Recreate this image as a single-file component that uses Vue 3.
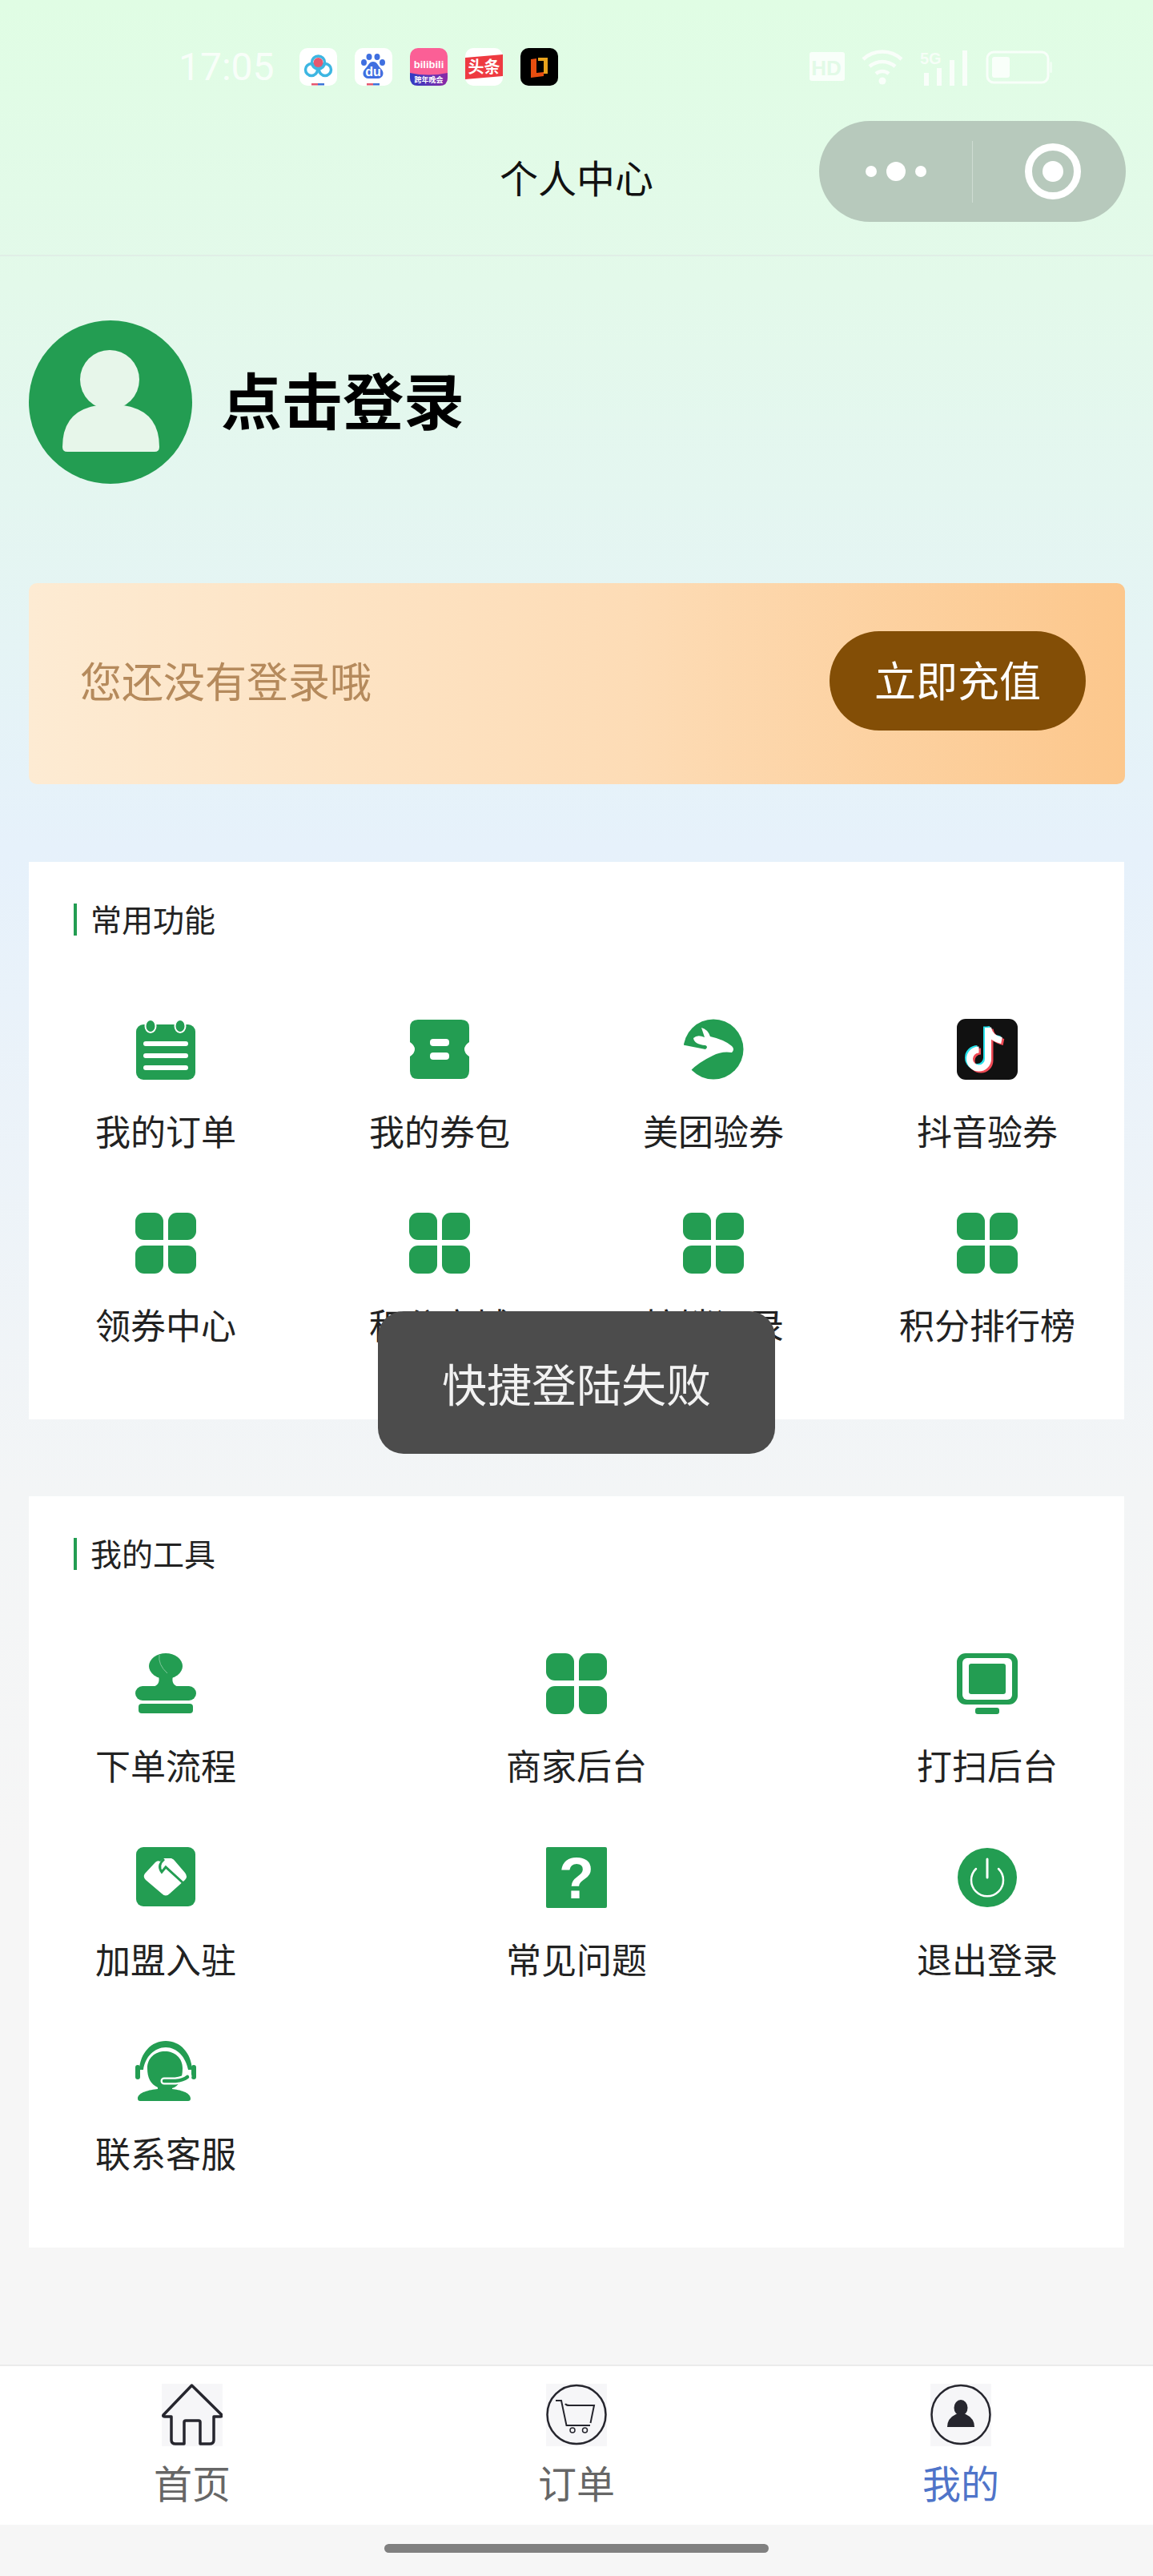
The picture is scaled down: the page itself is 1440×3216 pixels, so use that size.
<script setup>
const commonItems = [
  { icon: 'order', label: '我的订单' },
  { icon: 'ticket', label: '我的券包' },
  { icon: 'meituan', label: '美团验券' },
  { icon: 'douyin', label: '抖音验券' },
  { icon: 'grid', label: '领券中心' },
  { icon: 'grid', label: '积分商城' },
  { icon: 'grid', label: '核销记录' },
  { icon: 'grid', label: '积分排行榜' }
]

const toolItems = [
  { icon: 'stamp', label: '下单流程' },
  { icon: 'grid', label: '商家后台' },
  { icon: 'monitor', label: '打扫后台' },
  { icon: 'join', label: '加盟入驻' },
  { icon: 'help', label: '常见问题' },
  { icon: 'power', label: '退出登录' },
  { icon: 'service', label: '联系客服' }
]

const tabs = [
  { icon: 'tab-home', label: '首页' },
  { icon: 'tab-cart', label: '订单' },
  { icon: 'tab-me', label: '我的', active: true }
]
</script>

<template>
  <div class="page">
    <!-- icon sprite -->
    <svg class="sprite" aria-hidden="true">
      <defs>
        <linearGradient id="bili-bottom" x1="0" y1="0" x2="1" y2="0">
          <stop offset="0" stop-color="#2f3cc4" />
          <stop offset="1" stop-color="#8b2aa6" />
        </linearGradient>
      </defs>
      <symbol id="order" viewBox="0 0 76 76">
        <rect x="1" y="7" width="74" height="69" rx="9" fill="#239d52" />
        <ellipse cx="19" cy="9" rx="6.5" ry="8" fill="#239d52" stroke="#fff" stroke-width="2" />
        <ellipse cx="56" cy="9" rx="6.5" ry="8" fill="#239d52" stroke="#fff" stroke-width="2" />
        <path d="M13 31H63M13 46H63M13 61H63" stroke="#fff" stroke-width="6" stroke-linecap="round" />
      </symbol>
      <symbol id="ticket" viewBox="0 0 76 76">
        <path d="M11 1H65Q75 1 75 11V29Q69 33 69 38Q69 43 75 47V65Q75 75 65 75H11Q1 75 1 65V47Q7 43 7 38Q7 33 1 29V11Q1 1 11 1Z" fill="#239d52" />
        <rect x="26" y="25" width="24" height="9" rx="4" fill="#fff" />
        <rect x="26" y="42" width="24" height="9" rx="4" fill="#fff" />
      </symbol>
      <symbol id="meituan" viewBox="0 0 76 76">
        <circle cx="38" cy="38" r="37.5" fill="#239d52" />
        <path d="M-2 32 L28 38 Q32 35 28 33 Q14 32 13 24 Q18 19 27 23 L23 11 Q31 13 34 22 Q52 26 61 34 Q65 38 61 42 Q48 40 37 46 Q20 54 9 65 L-2 70Z" fill="#fff" />
      </symbol>
      <symbol id="douyin" viewBox="0 0 76 76">
        <rect width="76" height="76" rx="11" fill="#111" />
        <g fill="none" stroke-width="8">
          <path d="M39 11V50A11.500 11.500 0 1 1 27.500 38.500M39 11Q41 24 56 27" stroke="#25e0ea" transform="translate(-2 -1.500)" />
          <path d="M39 11V50A11.500 11.500 0 1 1 27.500 38.500M39 11Q41 24 56 27" stroke="#ef4a55" transform="translate(2.500 2)" />
          <path d="M39 11V50A11.500 11.500 0 1 1 27.500 38.500M39 11Q41 24 56 27" stroke="#fff" />
        </g>
      </symbol>
      <symbol id="grid" viewBox="0 0 76 76">
        <g fill="#239d52">
          <path d="M0 11A11 11 0 0 1 11 0H24A11 11 0 0 1 35 11V34H11A11 11 0 0 1 0 23Z" />
          <path d="M76 11A11 11 0 0 0 65 0H52A11 11 0 0 0 41 11V34H65A11 11 0 0 0 76 23Z" />
          <path d="M0 65A11 11 0 0 0 11 76H24A11 11 0 0 0 35 65V41H11A11 11 0 0 0 0 52Z" />
          <path d="M76 65A11 11 0 0 1 65 76H52A11 11 0 0 1 41 65V41H65A11 11 0 0 1 76 52Z" />
        </g>
      </symbol>
      <symbol id="stamp" viewBox="0 0 76 76">
        <g fill="#239d52">
          <ellipse cx="38" cy="16" rx="21" ry="16" />
          <path d="M29 28Q32 41 20 42H56Q44 41 47 28Z" />
          <rect y="41" width="76" height="18" rx="9" />
          <rect x="4" y="63" width="68" height="12" rx="4" />
        </g>
        <path d="M30 2Q28 14 40 25" fill="none" stroke="#7fc79b" stroke-width="1" />
      </symbol>
      <symbol id="monitor" viewBox="0 0 76 76">
        <rect width="76" height="64" rx="11" fill="#239d52" />
        <rect x="7" y="6" width="62" height="52" rx="6" fill="#fff" />
        <rect x="15" y="13" width="46" height="38" rx="3" fill="#239d52" />
        <rect x="23" y="68" width="30" height="8" rx="3" fill="#239d52" />
      </symbol>
      <symbol id="join" viewBox="0 0 76 76">
        <rect x="1" width="74" height="74" rx="9" fill="#239d52" />
        <path d="M25 19Q28 16 31 18L36 14H45Q48 15 50 18L62 32Q66 37 62 41L43 58Q38 63 33 58L13 41Q9 37 12 33Z" fill="#fff" />
        <path d="M36 15Q27 23 33 31L38 25L61 46" fill="none" stroke="#239d52" stroke-width="3" />
      </symbol>
      <symbol id="help" viewBox="0 0 76 76">
        <rect width="76" height="76" rx="2" fill="#239d52" />
      </symbol>
      <symbol id="power" viewBox="0 0 76 76">
        <circle cx="38" cy="38" r="37" fill="#239d52" />
        <path d="M24 27A20 20 0 1 0 52 27" fill="none" stroke="#fff" stroke-width="2.500" stroke-linecap="round" />
        <path d="M38 15V38" stroke="#fff" stroke-width="3" stroke-linecap="round" />
      </symbol>
      <symbol id="service" viewBox="0 0 76 76">
        <g fill="#239d52">
          <path d="M5 36C6 15 20 0 38 0S70 15 71 36H66C63 20 52 8 38 8S12 20 10 36Z" />
          <rect x="0" y="30" width="6" height="18" rx="3" />
          <rect x="70" y="30" width="6" height="18" rx="3" />
          <path d="M15 34C15 21 25 13 37 13S59 21 59 34C59 48 54 57 46 59V60C55 61 69 64 69 72Q69 75 66 75H6Q3 75 3 72C3 64 18 61 28 60V58C19 54 15 46 15 34Z" />
        </g>
        <path d="M36 50H50Q60 49 66 44" fill="none" stroke="#fff" stroke-width="9" stroke-linecap="round" />
        <path d="M36 50H50Q60 49 65 45" fill="none" stroke="#239d52" stroke-width="4.500" stroke-linecap="round" />
      </symbol>
      <symbol id="tab-home" viewBox="0 0 76 78">
        <rect width="76" height="78" fill="#f6f6f8" />
        <path d="M37.500 2L2 39Q1 41 4 41H12V70Q12 75 17 75H28V48Q28 46 30 46H46Q48 46 48 48V75H60Q65 75 65 70V41H73Q76 41 75 39Z" fill="none" stroke="#26262e" stroke-width="3.500" stroke-linejoin="round" />
      </symbol>
      <symbol id="tab-cart" viewBox="0 0 76 78">
        <rect width="76" height="78" fill="#f6f6f8" />
        <circle cx="38" cy="38.500" r="36.500" fill="none" stroke="#26262e" stroke-width="2.500" />
        <path d="M12 21H19L25.500 52H55" fill="none" stroke="#26262e" stroke-width="2" />
        <path d="M24 25Q25 27 29 27H60L55.500 49" fill="none" stroke="#26262e" stroke-width="2" />
        <circle cx="33" cy="58" r="3" fill="none" stroke="#26262e" stroke-width="1.500" />
        <circle cx="48.500" cy="58" r="3" fill="none" stroke="#26262e" stroke-width="1.500" />
      </symbol>
      <symbol id="tab-me" viewBox="0 0 76 78">
        <rect width="76" height="78" fill="#f6f6f8" />
        <circle cx="38" cy="38.500" r="36.500" fill="none" stroke="#26262e" stroke-width="2.500" />
        <ellipse cx="38" cy="30" rx="8.500" ry="10" fill="#26262e" />
        <path d="M21 54Q21 43 32 38H44Q55 43 55 54Z" fill="#26262e" />
      </symbol>
    </svg>

    <header class="topbar">
      <div class="status">
        <div class="status-left">
          <span class="time">17:05</span>
          <!-- background apps -->
          <div class="apps">
            <svg class="app" viewBox="0 0 47 47">
              <rect width="47" height="47" rx="10" fill="#fff" />
              <g fill="none" stroke="#3db6e2" stroke-width="3.500">
                <circle cx="15" cy="27" r="7.500" />
                <circle cx="32" cy="27" r="7.500" />
                <circle cx="23.500" cy="18" r="8" />
              </g>
              <circle cx="23.500" cy="18" r="6" fill="#e6586f" />
              <rect x="15" y="44" width="8" height="2.500" fill="#e6586f" />
              <rect x="23" y="44" width="8" height="2.500" fill="#3c74d8" />
            </svg>
            <svg class="app" viewBox="0 0 47 47">
              <rect width="47" height="47" rx="10" fill="#fff" />
              <g fill="#3f6fe0">
                <ellipse cx="11.500" cy="18" rx="3.500" ry="4" />
                <ellipse cx="18" cy="11" rx="3.500" ry="4" />
                <ellipse cx="28" cy="11" rx="3.500" ry="4" />
                <ellipse cx="34.500" cy="18" rx="3.500" ry="4" />
                <path d="M23 17C28 17 29 22 33 26C38 31 35 38 29 38H17C11 38 8 31 13 26C17 22 18 17 23 17Z" />
              </g>
              <text x="23" y="35" text-anchor="middle" class="app-du">du</text>
              <rect x="15" y="44" width="8" height="2.500" fill="#e6586f" />
              <rect x="23" y="44" width="8" height="2.500" fill="#3c74d8" />
            </svg>
            <svg class="app" viewBox="0 0 47 47">
              <rect width="47" height="47" rx="10" fill="#fb5f96" />
              <path d="M0 31Q23 36 47 31V37Q47 47 37 47H10Q0 47 0 37Z" fill="url(#bili-bottom)" />
              <text x="23.500" y="25" text-anchor="middle" class="app-bili">bilibili</text>
              <text x="23.500" y="43" text-anchor="middle" class="app-bili-sub">跨年晚会</text>
            </svg>
            <svg class="app" viewBox="0 0 47 47">
              <rect width="47" height="47" rx="10" fill="#fff" />
              <path d="M0 12L47 8V35L0 39Z" fill="#ee3a41" />
              <text x="23.500" y="31" text-anchor="middle" class="app-toutiao">头条</text>
            </svg>
            <svg class="app" viewBox="0 0 47 47">
              <rect width="47" height="47" rx="10" fill="#000" />
              <path d="M22 12H34V32H29V16H22Z" fill="#e8a21c" />
              <path d="M13 14L20 13V31L29 30V35L13 37Z" fill="#e84e10" />
            </svg>
          </div>
        </div>
        <div class="status-right">
          <svg class="ic-hd" viewBox="0 0 44 38">
            <rect width="44" height="36" rx="3" fill="#fff" opacity=".8" />
            <text x="21" y="29" text-anchor="middle" class="hd-text">HD</text>
          </svg>
          <svg class="ic-wifi" viewBox="0 0 54 46">
            <g fill="none" stroke="#fff" stroke-width="4.500" opacity=".8">
              <path d="M3 13A35 35 0 0 1 51 13" />
              <path d="M11 22A24 24 0 0 1 43 22" />
              <path d="M19 31A12 12 0 0 1 35 31" />
            </g>
            <circle cx="27" cy="40" r="4.500" fill="#fff" opacity=".8" />
          </svg>
          <svg class="ic-signal" viewBox="0 0 62 46">
            <text x="0" y="19" class="signal-text">5G</text>
            <g fill="#fff" opacity=".8">
              <rect x="5" y="30" width="6" height="16" />
              <rect x="21" y="24" width="6" height="22" />
              <rect x="37" y="14" width="6" height="32" />
              <rect x="53" y="2" width="6" height="44" />
            </g>
          </svg>
          <svg class="ic-battery" viewBox="0 0 84 42">
            <rect x="2" y="2" width="76" height="38" rx="8" fill="none" stroke="#fff" stroke-width="3" opacity=".75" />
            <rect x="8" y="8" width="22" height="26" rx="3" fill="#fff" opacity=".8" />
            <rect x="80" y="14" width="3" height="14" rx="1.500" fill="#fff" opacity=".5" />
          </svg>
        </div>
      </div>
      <div class="navbar">
        <h1 class="nav-title">个人中心</h1>
        <div class="capsule">
          <div class="capsule-more">
            <i class="dot"></i>
            <i class="dot dot-big"></i>
            <i class="dot"></i>
          </div>
          <div class="capsule-line"></div>
          <div class="capsule-close"><i></i></div>
        </div>
      </div>
    </header>

    <section class="profile">
      <svg class="avatar" viewBox="0 0 204 204">
        <circle cx="102" cy="102" r="102" fill="#239d52" />
        <circle cx="101" cy="74" r="37" fill="#e7f6ea" />
        <path d="M42 158Q42 105 102 105Q163 105 163 158Q163 164 157 164H48Q42 164 42 158Z" fill="#e7f6ea" />
      </svg>
      <span class="login-text">点击登录</span>
    </section>

    <section class="banner">
      <span class="banner-text">您还没有登录哦</span>
      <span class="banner-btn">立即充值</span>
    </section>

    <section class="card card-common">
      <h2 class="card-title">常用功能</h2>
      <div class="grid-four">
        <div v-for="item in commonItems" :key="item.label" class="item">
          <svg class="item-icon"><use :href="'#' + item.icon" /></svg>
          <span class="item-label">{{ item.label }}</span>
        </div>
      </div>
    </section>

    <section class="card card-tools">
      <h2 class="card-title">我的工具</h2>
      <div class="grid-three">
        <div v-for="item in toolItems" :key="item.label" class="item">
          <svg class="item-icon">
            <use :href="'#' + item.icon" />
            <text v-if="item.icon === 'help'" x="38" y="64" text-anchor="middle" class="help-mark">?</text>
          </svg>
          <span class="item-label">{{ item.label }}</span>
        </div>
      </div>
    </section>

    <div class="spacer"></div>

    <nav class="tabbar">
      <div v-for="tab in tabs" :key="tab.label" class="tab" :class="{ active: tab.active }">
        <svg class="tab-icon"><use :href="'#' + tab.icon" /></svg>
        <span class="tab-label">{{ tab.label }}</span>
      </div>
    </nav>
    <div class="home-area"><div class="home-bar"></div></div>

    <div class="toast">快捷登陆失败</div>
  </div>
</template>

<style scoped>
.page {
  position: relative;
  width: 1440px;
  min-height: 3216px;
  display: flex;
  flex-direction: column;
  overflow: hidden;
  font-family: "Noto Sans CJK SC", "Noto Sans", sans-serif;
  color: #222;
  background: linear-gradient(180deg, #e0fde4 0, #e3f9ea 11%, #e6f1fb 33%, #f3f5f6 58%, #f6f6f6 72%);
}

.sprite {
  position: absolute;
  width: 0;
  height: 0;
}

.topbar {
  height: 320px;
  border-bottom: 2px solid #e0eee6;
  box-sizing: border-box;
}

.status {
  height: 150px;
  box-sizing: border-box;
  padding: 60px 125px 0 223px;
  display: flex;
  justify-content: space-between;
  align-items: flex-start;
}

.status-left {
  display: flex;
  align-items: center;
  height: 47px;
}

.time {
  width: 151px;
  font-family: Roboto, sans-serif;
  font-size: 48px;
  line-height: 47px;
  color: rgba(255, 255, 255, 0.8);
}

.apps {
  display: flex;
  gap: 22px;
}

.app {
  width: 47px;
  height: 47px;
  display: block;
}

.app-du {
  font-family: "Liberation Sans", sans-serif;
  font-size: 16px;
  font-weight: 700;
  fill: #fff;
}

.app-bili {
  font-family: "Liberation Sans", sans-serif;
  font-size: 13px;
  font-weight: 700;
  fill: #fff;
}

.app-bili-sub {
  font-size: 9px;
  font-weight: 700;
  fill: #fff;
}

.app-toutiao {
  font-size: 20px;
  font-weight: 700;
  fill: #fff;
}

.status-right {
  display: flex;
  align-items: center;
  height: 47px;
  gap: 20px;
}

.ic-hd {
  width: 44px;
  height: 38px;
}

.hd-text {
  font-family: "Liberation Sans", sans-serif;
  font-size: 26px;
  font-weight: 700;
  fill: #e2fae7;
}

.ic-wifi {
  width: 54px;
  height: 46px;
}

.ic-signal {
  width: 62px;
  height: 46px;
}

.signal-text {
  font-family: "Liberation Sans", sans-serif;
  font-size: 20px;
  font-weight: 700;
  fill: #fff;
  opacity: 0.7;
}

.ic-battery {
  width: 84px;
  height: 42px;
}

.navbar {
  display: flex;
  justify-content: center;
  position: relative;
  height: 168px;
}

.nav-title {
  margin: 46px 0 0;
  font-size: 48px;
  line-height: 48px;
  font-weight: 400;
  color: #111;
}

/* wechat menu capsule sits over the nav bar */
.capsule {
  position: absolute;
  top: 1px;
  left: 1023px;
  width: 383px;
  height: 126px;
  border-radius: 63px;
  background: #b7c9bc;
  display: flex;
  align-items: center;
}

.capsule-more {
  width: 191px;
  display: flex;
  justify-content: center;
  align-items: center;
  gap: 12px;
}

.dot {
  width: 14px;
  height: 14px;
  border-radius: 50%;
  background: #fff;
}

.dot-big {
  width: 24px;
  height: 24px;
}

.capsule-line {
  width: 1px;
  height: 77px;
  background: #cfdcd3;
}

.capsule-close {
  flex: 1;
  display: flex;
  justify-content: center;
  padding-left: 8px;
}

.capsule-close i {
  width: 70px;
  height: 70px;
  box-sizing: border-box;
  border: 9px solid #fff;
  border-radius: 50%;
  display: flex;
  align-items: center;
  justify-content: center;
}

.capsule-close i::after {
  content: "";
  width: 26px;
  height: 26px;
  border-radius: 50%;
  background: #fff;
}

.profile {
  display: flex;
  align-items: center;
  gap: 36px;
  padding: 80px 0 0 36px;
}

.avatar {
  width: 204px;
  height: 204px;
  display: block;
}

.login-text {
  padding-bottom: 10px;
  font-size: 76px;
  line-height: 90px;
  font-weight: 700;
  color: #000;
}

.banner {
  margin: 124px 35px 0 36px;
  height: 251px;
  padding: 0 49px 0 64px;
  border-radius: 10px;
  display: flex;
  align-items: center;
  justify-content: space-between;
  background: linear-gradient(90deg, #fdebd3 0, #fddcb6 55%, #fcc78c 100%);
}

.banner-text {
  padding-bottom: 10px;
  font-size: 52px;
  color: #b58a5c;
}

.banner-btn {
  width: 320px;
  height: 124px;
  margin-bottom: 8px;
  border-radius: 62px;
  background: #834e06;
  color: #fff;
  font-size: 52px;
  line-height: 120px;
  text-align: center;
}

.card {
  margin: 97px 36px 0;
  padding: 52px 0 86px;
  background: #fff;
}

.card-tools {
  margin-top: 96px;
}

.card-title {
  display: flex;
  gap: 17px;
  height: 40px;
  margin: 0 0 104px 56px;
  font-size: 39px;
  line-height: 36px;
  font-weight: 400;
  color: #222;
}

.card-title::before {
  content: "";
  width: 4px;
  height: 40px;
  background: #239d52;
}

.grid-four {
  display: grid;
  grid-template-columns: repeat(4, 342px);
  row-gap: 70px;
}

.grid-three {
  display: grid;
  grid-template-columns: repeat(3, 342px);
  justify-content: space-between;
  row-gap: 70px;
}

.item {
  display: flex;
  flex-direction: column;
  align-items: center;
}

.item-icon {
  width: 76px;
  height: 76px;
  display: block;
  overflow: visible;
}

.help-mark {
  font-family: "Liberation Sans", sans-serif;
  font-size: 72px;
  font-weight: 700;
  fill: #fff;
}

.item-label {
  margin: 33px 0 3px;
  font-size: 44px;
  line-height: 60px;
  color: #222;
}

.spacer {
  flex: 1;
}

.tabbar {
  height: 200px;
  box-sizing: border-box;
  border-top: 2px solid #ebebeb;
  background: #fff;
  display: grid;
  grid-template-columns: repeat(3, 1fr);
  padding-top: 22px;
}

.tab {
  display: flex;
  flex-direction: column;
  align-items: center;
}

.tab-icon {
  width: 76px;
  height: 78px;
  display: block;
}

.tab-label {
  margin-top: 14px;
  font-size: 48px;
  line-height: 60px;
  color: #666;
}

.tab.active .tab-label {
  color: #4f74c9;
}

.home-area {
  height: 64px;
  box-sizing: border-box;
  padding-top: 24px;
  background: #f6f6f6;
}

.home-bar {
  width: 480px;
  height: 11px;
  margin: 0 auto;
  border-radius: 6px;
  background: #808080;
}

.toast {
  position: absolute;
  top: 1637px;
  left: 50%;
  transform: translateX(-50%);
  width: 496px;
  height: 178px;
  border-radius: 32px;
  background: #4c4c4c;
  color: #f2f2f2;
  font-size: 56px;
  line-height: 178px;
  text-align: center;
}
</style>
